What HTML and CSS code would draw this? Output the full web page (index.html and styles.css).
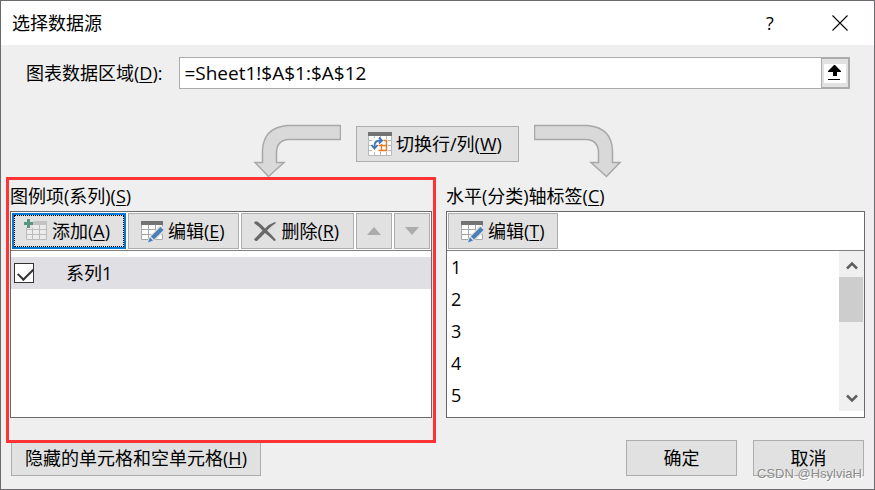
FILE: index.html
```html
<!DOCTYPE html>
<html lang="zh-CN">
<head>
<meta charset="utf-8">
<meta name="viewport" content="width=device-width, initial-scale=1">
<title>选择数据源</title>
<link rel="stylesheet" href="styles.css">
</head>
<body>
<svg class="defs" width="0" height="0" aria-hidden="true">
  <symbol id="icon-edit" viewBox="0 0 24 24">
    <path fill="#fff" d="M1 2h22v19H1z"/>
    <path fill="#737373" d="M1 2h22v4H1z"/>
    <path fill="none" stroke="#a6a6a6" d="M1.500 6v14.500h21V6M1 10.500h22M1 15.500h22M8.500 6v14M15.500 6v14"/>
    <path fill="#e1e1e1" d="M7 24l2-6L20 6l5 3v4L12 23z"/>
    <path fill="#4a7ebb" d="M11 17.500L20.500 8l3 3-9.500 9.500z"/>
    <path fill="#4a7ebb" d="M10 18.500l3 3L8 23.500z"/>
  </symbol>
</svg>
<main class="dialog">
  <header class="titlebar">
    <h1 class="title">选择数据源</h1>
    <button class="title-button" type="button" aria-label="帮助">?</button>
    <button class="title-button title-close" type="button" aria-label="关闭">
      <svg width="16" height="16" viewBox="0 0 16 16"><path d="M.5.5l15 15M15.500.5l-15 15" fill="none" stroke="#000" stroke-width="1.100"/></svg>
    </button>
  </header>

  <form class="content">
    <div class="range">
      <label class="range-label" for="range">图表数据区域(<u>D</u>):</label>
      <div class="range-field">
        <input class="range-input" id="range" type="text" value="=Sheet1!$A$1:$A$12">
        <button class="range-picker" type="button" aria-label="折叠对话框">
          <svg width="22" height="19" viewBox="0 0 22 19"><path fill="#fff" d="M0 0h22v19H0z"/><path d="M10 1h1l6 6v1h-4v4H9V8H4V7zM4 15h12v1H4z"/></svg>
        </button>
      </div>
    </div>

    <div class="switch">
      <svg width="88" height="54" viewBox="0 0 88 54" aria-hidden="true"><path d="M87.500 1.500v14H36Q23.500 16 23.500 29v9.500H31L15.500 52.500 2 38.500h7.500V27Q10 4 34 1.500z" fill="#d9d9d9" stroke="#a8a8a8" stroke-width="1.500"/></svg>
      <button class="button with-icon switch-button" type="button">
        <svg width="24" height="24" viewBox="0 0 24 24">
          <path fill="#fff" d="M0 0h24v24H0z"/>
          <path fill="none" stroke="#b8b8b8" d="M.5 4v19.500h23V4M0 8.500h4M0 13.500h4M0 18.500h4M20 8.500h4M20 13.500h4M20 18.500h4M6.500 4v2M12.500 4v2M18.500 4v3M6.500 20v4M12.500 20v4M18.500 20v4"/>
          <path fill="#737373" d="M0 0h24v4H0z"/>
          <path fill="none" stroke="#e87722" stroke-width="1.400" d="M15.500 8.500h3v10h-8M10.500 13.500h8M13.500 12v6.500"/>
          <path fill="none" stroke="#3f78b5" stroke-width="1.800" d="M13.500 8.500h-1.500Q6.500 8.500 6.500 14v2M11 5.500l3 3-3 3M3.500 13l3 3.500 3-3.500"/>
        </svg>
        <span>切换行/列(<u>W</u>)</span>
      </button>
      <svg width="88" height="54" viewBox="0 0 88 54" aria-hidden="true"><path d="M.5 1.500v14H52Q64.500 16 64.500 29v9.500H57L72.500 52.500 86 38.500h-7.500V27Q78 4 54 1.500z" fill="#d9d9d9" stroke="#a8a8a8" stroke-width="1.500"/></svg>
    </div>

    <div class="columns">
      <section class="column">
        <h2 class="column-title">图例项(系列)(<u>S</u>)</h2>
        <div class="panel">
          <div class="toolbar series-toolbar">
            <button class="button with-icon focused" type="button">
              <svg width="24" height="24" viewBox="0 0 24 24">
                <path fill="#ececec" d="M2 3h21v18H2z"/>
                <path fill="#c3c3c3" d="M9 2h14v4H9z"/>
                <path fill="none" stroke="#bcbcbc" d="M2.500 9v11.500h20V6M2 10.500h21M2 15.500h21M8.500 6v14M15.500 6v14"/>
                <path fill="#e1e1e1" d="M0 0h9v9H0z"/>
                <path fill="#57967f" d="M3 0h3v3h3v3H6v3H3V6H0V3h3z"/>
              </svg>
              <span>添加(<u>A</u>)</span>
            </button>
            <button class="button with-icon" type="button"><svg width="24" height="24"><use href="#icon-edit"/></svg><span>编辑(<u>E</u>)</span></button>
            <button class="button with-icon" type="button">
              <svg width="24" height="24" viewBox="0 0 24 24"><path fill="#696969" d="M1 4Q2 1 5 3q4 3 7 6.500Q16 5 22 3l1 1q-5 3-9 7.500 5 4.500 9 9.500-1 1-2 1-5-5-9-8-4 4-7.500 7.500Q3 23 1 20.500 5 16 9.500 11.500 6 7.500 1 4z"/></svg>
              <span>删除(<u>R</u>)</span>
            </button>
            <button class="button move" type="button" aria-label="上移" disabled><svg width="14" height="8" viewBox="0 0 14 8"><path fill="#ababab" d="M7 0l7 8H0z"/></svg></button>
            <button class="button move" type="button" aria-label="下移" disabled><svg width="14" height="8" viewBox="0 0 14 8"><path fill="#ababab" d="M0 0h14L7 8z"/></svg></button>
          </div>
          <div class="series-list">
            <label class="series"><input class="check" type="checkbox" checked><span>系列1</span></label>
          </div>
        </div>
        <div class="highlight"></div>
      </section>

      <section class="column">
        <h2 class="column-title">水平(分类)轴标签(<u>C</u>)</h2>
        <div class="panel">
          <div class="toolbar">
            <button class="button with-icon" type="button"><svg width="24" height="24"><use href="#icon-edit"/></svg><span>编辑(<u>T</u>)</span></button>
          </div>
          <div class="axis-body">
            <ul class="axis-list"><li>1</li><li>2</li><li>3</li><li>4</li><li>5</li></ul>
            <div class="scrollbar">
              <svg width="12" height="9" viewBox="0 0 12 9"><path d="M1 7.500l5-5 5 5" fill="none" stroke="#606060" stroke-width="2.500"/></svg>
              <div class="thumb"></div>
              <svg class="scroll-down" width="12" height="9" viewBox="0 0 12 9"><path d="M1 1.500l5 5 5-5" fill="none" stroke="#606060" stroke-width="2.500"/></svg>
            </div>
          </div>
        </div>
      </section>
    </div>

    <footer class="actions">
      <button class="button hidden-cells" type="button"><span>隐藏的单元格和空单元格(<u>H</u>)</span></button>
      <button class="button action" type="button">确定</button>
      <button class="button action" type="button">取消</button>
    </footer>
  </form>
  <div class="watermark">CSDN @HsylviaH</div>
</main>
</body>
</html>
```
FILE: styles.css
```css
* {
  box-sizing: border-box;
}

body {
  margin: 0;
  background: #efefef;
  color: #000;
  font: 18px/24px "Open Sans", "Noto Sans CJK SC", sans-serif;
}

button,
input {
  font: inherit;
  color: inherit;
}

svg {
  display: block;
  flex: none;
}

u {
  text-decoration-thickness: 1px;
  text-underline-offset: 2px;
}

.defs {
  position: absolute;
}

.dialog {
  position: relative;
  min-height: 100vh;
  border: 1px solid #6b696b;
  background: #efefef;
}

.titlebar {
  display: flex;
  align-items: center;
  height: 44px;
  padding: 0 18px 0 11px;
  background: #fff;
}

.title {
  flex: 1;
  margin: 0;
  font-size: 18px;
  font-weight: 400;
}

.title-button {
  display: flex;
  justify-content: center;
  align-items: center;
  width: 32px;
  height: 32px;
  padding: 0;
  border: 0;
  background: none;
}

.title-close {
  margin-left: 38px;
}

.content {
  padding: 12px 9px;
}

.range {
  display: flex;
  align-items: center;
  gap: 17px;
  padding: 0 15px 0 16px;
}

.range-field {
  display: flex;
  flex: 1;
  height: 32px;
  border: 1px solid #ababab;
}

.range-input {
  flex: 1;
  min-width: 0;
  padding: 0 4px;
  border: 0;
  outline: 0;
  background: #fff;
  font-size: 19px;
}

.range-picker {
  display: flex;
  align-items: center;
  justify-content: center;
  width: 28px;
  padding: 0;
  border: 1px solid #ababab;
  background: #e1e1e1;
}

.switch {
  display: flex;
  justify-content: center;
  gap: 15px;
  height: 54px;
  margin-top: 35px;
}

.button {
  display: flex;
  align-items: center;
  justify-content: center;
  height: 36px;
  padding: 0;
  border: 1px solid #adadad;
  background: #e1e1e1;
  white-space: nowrap;
}

.with-icon {
  justify-content: flex-start;
  gap: 4px;
  padding: 0 12px 0 11px;
}

.switch-button {
  width: 163px;
  margin-top: 2px;
}

.columns {
  display: grid;
  grid-template-columns: 422fr 419fr;
  gap: 14px;
  margin-top: 6px;
}

.column {
  position: relative;
}

.column-title {
  margin: 0 0 3px;
  font-size: 18px;
  font-weight: 400;
}

.panel {
  border: 1px solid #696969;
  background: #fff;
}

.toolbar {
  display: flex;
  gap: 2px;
  padding: 1px;
  border-bottom: 1px solid #808080;
}

.series-toolbar .with-icon {
  flex: 1 1 auto;
}

.focused {
  padding: 0 12px 0 10px;
  border: 2px solid #0078d7;
  outline: 1px dotted #000;
  outline-offset: -3px;
}

.move {
  width: 36px;
}

.series-list,
.axis-body {
  height: 166px;
}

.series-list {
  padding-top: 6px;
}

.series {
  display: flex;
  align-items: center;
  gap: 32px;
  height: 32px;
  padding-left: 3px;
  background: #e0dfe4;
}

.check {
  appearance: none;
  width: 20px;
  height: 20px;
  margin: 0;
  border: 1px solid #333;
  background: #fff;
}

.check:checked::before {
  content: "";
  display: block;
  width: 13px;
  height: 7px;
  margin: 4px 3px;
  border: solid #333;
  border-width: 0 0 2px 2px;
  transform: rotate(-45deg);
}

.axis-body {
  display: flex;
}

.axis-list {
  flex: 1;
  margin: 0;
  padding: 0 4px;
  list-style: none;
  line-height: 32px;
}

.scrollbar {
  display: flex;
  flex-direction: column;
  align-items: center;
  width: 25px;
  height: 160px;
  padding: 10px 0 8px;
  background: #f0f0f0;
}

.thumb {
  width: 24px;
  height: 45px;
  margin: 7px 1px 0 0;
  background: #cdcdcd;
}

.scroll-down {
  margin-top: auto;
}

.highlight {
  position: absolute;
  inset: -7px -4px -25px -4px;
  border: 3px solid #ff3333;
  pointer-events: none;
}

.actions {
  display: flex;
  gap: 16px;
  margin-top: 22px;
  padding: 0 1px;
}

.hidden-cells {
  width: 250px;
  margin-right: auto;
}

.action {
  width: 111px;
}

.watermark {
  position: absolute;
  right: 12px;
  bottom: 5px;
  color: #8c8c8c;
  font: 13px/20px "Liberation Sans", sans-serif;
  text-shadow: 1px 1px 0 #fff;
}
```
